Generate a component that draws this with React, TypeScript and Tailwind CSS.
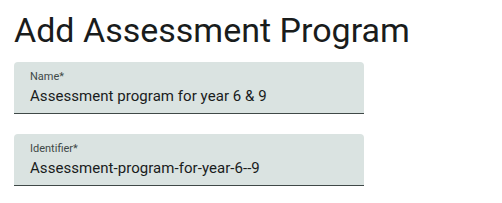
export default function App() {
  const fields = [
    { label: 'Name*', value: 'Assessment program for year 6 & 9' },
    { label: 'Identifier*', value: 'Assessment-program-for-year-6--9' },
  ];

  return (
    <div className="min-h-screen bg-white pl-[14px] pt-[8px] font-['Roboto',sans-serif] text-[#191c1c]">
      <h1 className="text-[34px] leading-[44px] font-normal">Add Assessment Program</h1>
      <div className="mt-[10px] flex flex-col gap-[20px]">
        {fields.map((f) => (
          <div
            key={f.label}
            className="w-[350px] h-[52px] rounded-t-[4px] bg-[#dae3e1] border-b border-[#3f4947] px-[16px] pt-[7px]"
          >
            <div className="text-[11px] leading-[16px] text-[#3f4947]">{f.label}</div>
            <div className="text-[15px] leading-[22px] tracking-[0.05px]">{f.value}</div>
          </div>
        ))}
      </div>
    </div>
  );
}
